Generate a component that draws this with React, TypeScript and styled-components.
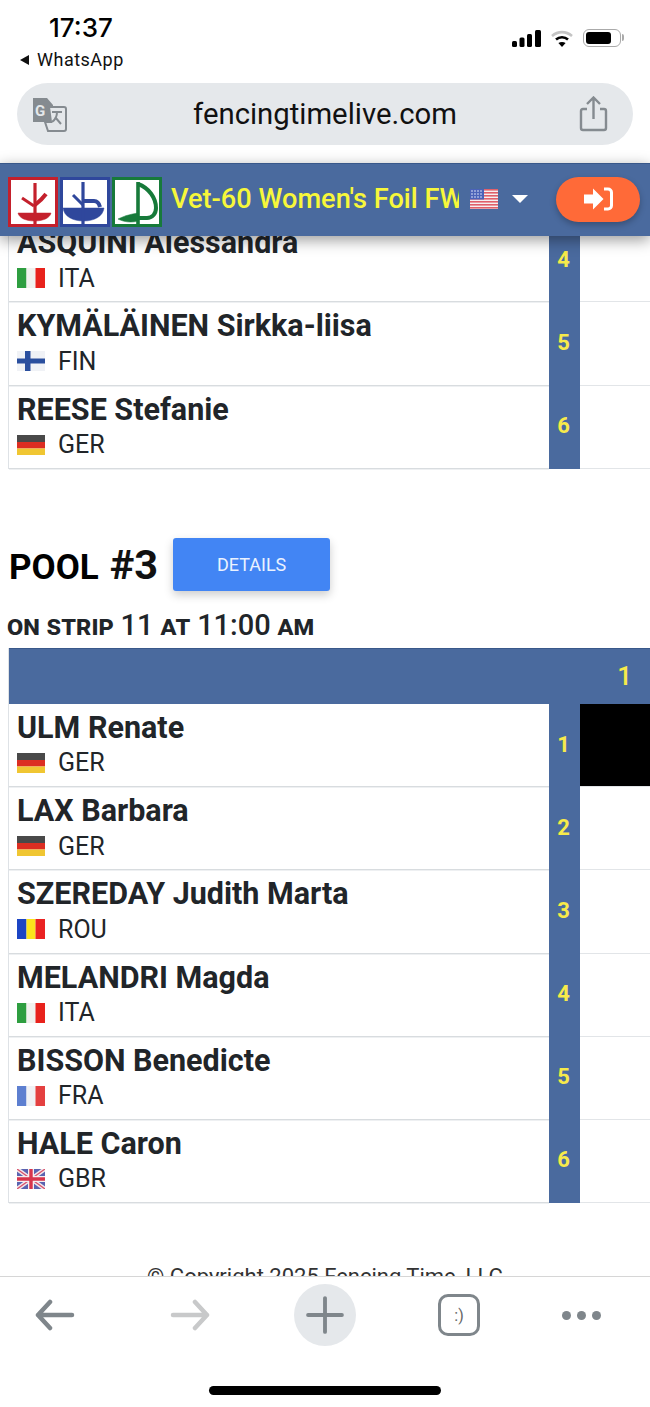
import React from "react";
import styled, { createGlobalStyle } from "styled-components";
import { Plus } from "lucide-react";

const GlobalStyle = createGlobalStyle`
  html, body {
    margin: 0;
    padding: 0;
    background: #fff;
  }
  * {
    box-sizing: border-box;
  }
`;

type Fencer = { name: string; code: string };

const topPool: Fencer[] = [
  { name: "ASQUINI Alessandra", code: "ITA" },
  { name: "KYMÄLÄINEN Sirkka-liisa", code: "FIN" },
  { name: "REESE Stefanie", code: "GER" },
];

const pool3: Fencer[] = [
  { name: "ULM Renate", code: "GER" },
  { name: "LAX Barbara", code: "GER" },
  { name: "SZEREDAY Judith Marta", code: "ROU" },
  { name: "MELANDRI Magda", code: "ITA" },
  { name: "BISSON Benedicte", code: "FRA" },
  { name: "HALE Caron", code: "GBR" },
];

function FlagArt({ code }: { code: string }) {
  switch (code) {
    case "ITA":
      return (
        <>
          <rect width="9.5" height="20" fill="#2f9e3f" />
          <rect x="9.5" width="9" height="20" fill="#f1f1ee" />
          <rect x="18.5" width="9.5" height="20" fill="#e8211f" />
        </>
      );
    case "FIN":
      return (
        <>
          <rect width="28" height="20" fill="#f0f2f6" />
          <rect x="8" width="5.500" height="20" fill="#2c4f9e" />
          <rect y="7.500" width="28" height="5" fill="#2c4f9e" />
        </>
      );
    case "GER":
      return (
        <>
          <rect width="28" height="7" fill="#4a4a48" />
          <rect y="7" width="28" height="6.500" fill="#dc2f22" />
          <rect y="13.500" width="28" height="6.500" fill="#f0c632" />
        </>
      );
    case "ROU":
      return (
        <>
          <rect width="9.5" height="20" fill="#1f45c4" />
          <rect x="9.5" width="9" height="20" fill="#fbe31a" />
          <rect x="18.5" width="9.5" height="20" fill="#ea2320" />
        </>
      );
    case "FRA":
      return (
        <>
          <rect width="9.5" height="20" fill="#5d7fd0" />
          <rect x="9.5" width="9" height="20" fill="#f0f1f4" />
          <rect x="18.5" width="9.5" height="20" fill="#e4403f" />
        </>
      );
    default:
      return (
        <>
          <rect width="28" height="20" fill="#5a64b0" />
          <path d="M0 0l28 20M28 0L0 20" stroke="#f2e6ea" strokeWidth="4" />
          <path d="M0 0l28 20M28 0L0 20" stroke="#d8506a" strokeWidth="1.300" />
          <path d="M14 0v20M0 10h28" stroke="#f4eef0" strokeWidth="6" />
          <path d="M14 0v20M0 10h28" stroke="#d8344c" strokeWidth="3.400" />
        </>
      );
  }
}

function Flag({ code }: { code: string }) {
  return (
    <FlagSvg viewBox="0 0 28 20">
      <filter id={`soft-${code}`}>
        <feGaussianBlur stdDeviation="0.55" />
      </filter>
      <g filter={`url(#soft-${code})`}>
        <FlagArt code={code} />
      </g>
    </FlagSvg>
  );
}

function UsFlag() {
  return (
    <UsFlagSvg viewBox="0 0 28 20">
      <rect width="28" height="20" fill="#f6f0f0" />
      {[0, 3, 6, 9, 12, 15, 18].map((y) => (
        <rect key={y} y={y} width="28" height="1.6" fill="#e0606a" />
      ))}
      <rect width="14" height="10.5" fill="#4a62b8" />
      {[2, 5, 8].map((y) =>
        [2, 5, 8, 11].map((x) => (
          <circle key={`${x}-${y}`} cx={x} cy={y} r="0.8" fill="#e8ecff" />
        ))
      )}
    </UsFlagSvg>
  );
}

function Logo({ color, kind }: { color: string; kind: "foil" | "epee" | "sabre" }) {
  return (
    <LogoBox $color={color}>
      <svg viewBox="0 0 44 44" width="44" height="44">
        {kind === "foil" && (
          <g fill={color} stroke={color}>
            <path d="M7 33h33c-1 5-8 8-16.500 8S8 38 7 33z" strokeWidth="0.500" />
            <path d="M24 3v41" strokeWidth="3.200" fill="none" />
            <path d="M11 18l12 8" strokeWidth="3" fill="none" />
            <path d="M35 14c-3 4-7 8-11 11" strokeWidth="4" fill="none" />
          </g>
        )}
        {kind === "epee" && (
          <g fill={color} stroke={color}>
            <path d="M0 28h41c-1 8-9 13-20.500 13S1 36 0 28z" strokeWidth="0.500" />
            <path d="M20 2v42" strokeWidth="3.200" fill="none" />
            <path d="M10 15l10 10" strokeWidth="3" fill="none" />
            <path d="M20 21h11c3 0 5 2 6 6" strokeWidth="4" fill="none" />
          </g>
        )}
        {kind === "sabre" && (
          <g fill="none" stroke={color}>
            <path d="M23 2v42" strokeWidth="3.600" />
            <path d="M23 4c11 4 18 14 18 24 0 6-4 10-9 10h-8" strokeWidth="4" />
            <path d="M3 39c6-3 13-5 20-6v8c-7 2-14 1-20-2z" fill={color} strokeWidth="0.500" />
          </g>
        )}
      </svg>
    </LogoBox>
  );
}

function PoolRow({ fencer, index, blocked }: { fencer: Fencer; index: number; blocked?: boolean }) {
  return (
    <Row>
      <NameCell>
        <FencerName>{fencer.name}</FencerName>
        <CountryLine>
          <Flag code={fencer.code} />
          <CountryCode>{fencer.code}</CountryCode>
        </CountryLine>
      </NameCell>
      <IndexCell>{index}</IndexCell>
      <BoutCell $blocked={blocked} />
    </Row>
  );
}

export default function App() {
  return (
    <>
      <GlobalStyle />
      <Screen>
        <BrowserTop>
          <StatusBar>
            <div>
              <Clock>17:37</Clock>
              <BackLink>
                <BackTriangle />
                WhatsApp
              </BackLink>
            </div>
            <StatusIcons>
              <svg width="29" height="17" viewBox="0 0 29 17" fill="#000">
                <rect x="0" y="11" width="5" height="6" rx="1.500" />
                <rect x="7.500" y="7.500" width="5" height="9.500" rx="1.500" />
                <rect x="15" y="4" width="5" height="13" rx="1.500" />
                <rect x="23" y="0" width="6" height="17" rx="1.500" />
              </svg>
              <svg width="24" height="17" viewBox="0 0 24 17" fill="none">
                <path d="M2 6C8 .8 16 .8 22 6" stroke="#c4c4c4" strokeWidth="2.600" />
                <path d="M6 9.500c3.400-3 8.600-3 12 0" stroke="#000" strokeWidth="2.600" />
                <path d="M12 17l-3.600-4c2.100-1.500 5.100-1.500 7.200 0z" fill="#000" />
              </svg>
              <Battery>
                <BatteryLevel />
              </Battery>
            </StatusIcons>
          </StatusBar>
          <AddressBar>
            <svg width="36" height="36" viewBox="0 0 36 36">
              <path d="M2 2h14l6 7v17H2z" fill="#858b90" />
              <path d="M18 11h15c1 0 2 1 2 2v20c0 1-1 2-2 2H17l-3-9h6z" fill="#e4e7ea" stroke="#858b90" strokeWidth="2" />
              <text x="4" y="20" fontSize="15" fontWeight="700" fontFamily="Roboto, sans-serif" fill="#e4e7ea">G</text>
              <path d="M21 16h10M26 16c0 5-2 8-5 10M24 21l6 7" stroke="#858b90" strokeWidth="2" fill="none" />
            </svg>
            <Url>fencingtimelive.com</Url>
            <svg width="30" height="36" viewBox="0 0 30 36" fill="none" stroke="#858b90" strokeWidth="2.400">
              <path d="M8 13H4c-1.400 0-2 .8-2 2v17c0 1.400.7 2 2 2h21c1.400 0 2-.7 2-2V15c0-1.300-.6-2-2-2h-4" />
              <path d="M14.500 23V2M8 8l6.500-6.500L21 8" />
            </svg>
          </AddressBar>
        </BrowserTop>

        <NavBar>
          <Logos>
            <Logo color="#c4202c" kind="foil" />
            <Logo color="#2f479c" kind="epee" />
            <Logo color="#177a3a" kind="sabre" />
          </Logos>
          <EventTitle>Vet-60 Women's Foil FWV60</EventTitle>
          <UsFlag />
          <Caret />
          <LoginButton aria-label="Sign in">
            <svg width="30" height="24" viewBox="0 0 30 24">
              <path d="M1 7.500h9V1.500L20.500 12 10 22.500v-6H1z" fill="#fff" />
              <path d="M21 2h4c2 0 3.500 1.500 3.500 3.500v13c0 2-1.500 3.500-3.500 3.500h-4" fill="none" stroke="#fff" strokeWidth="3" />
            </svg>
          </LoginButton>
        </NavBar>

        <Content>
          <Scrolled>
            <Table>
              {topPool.map((fencer, i) => (
                <PoolRow key={fencer.name} fencer={fencer} index={i + 4} />
              ))}
            </Table>

            <PoolHeading>
              <PoolTitle>
                POOL <PoolNumber>#3</PoolNumber>
              </PoolTitle>
              <DetailsButton>DETAILS</DetailsButton>
            </PoolHeading>
            <StripLine>
              on strip <StripValue>11</StripValue> at <StripValue>11:00</StripValue> am
            </StripLine>

            <Table>
              <HeaderRow>
                <HeaderNumber>1</HeaderNumber>
              </HeaderRow>
              {pool3.map((fencer, i) => (
                <PoolRow key={fencer.name} fencer={fencer} index={i + 1} blocked={i === 0} />
              ))}
            </Table>

            <Copyright>© Copyright 2025 Fencing Time, LLC</Copyright>
          </Scrolled>
        </Content>

        <BottomBar>
          <BottomIcons>
            <IconSlot>
              <svg width="40" height="32" viewBox="0 0 40 32" fill="none" stroke="#7f868b" strokeWidth="4.500" strokeLinecap="round" strokeLinejoin="round">
                <path d="M37 16H3M15 3L3 16l12 13" />
              </svg>
            </IconSlot>
            <IconSlot>
              <svg width="40" height="32" viewBox="0 0 40 32" fill="none" stroke="#c8c9ca" strokeWidth="4.500" strokeLinecap="round" strokeLinejoin="round">
                <path d="M3 16h34M25 3l12 13-12 13" />
              </svg>
            </IconSlot>
            <PlusCircle>
              <Plus size={58} color="#7f868b" strokeWidth={1.6} />
            </PlusCircle>
            <IconSlot>
              <TabCounter>:)</TabCounter>
            </IconSlot>
            <IconSlot>
              <Dots>
                <Dot />
                <Dot />
                <Dot />
              </Dots>
            </IconSlot>
          </BottomIcons>
          <HomeIndicator />
        </BottomBar>
      </Screen>
    </>
  );
}

const Screen = styled.div`
  width: 650px;
  height: 1407px;
  display: flex;
  flex-direction: column;
  overflow: hidden;
  background: #fff;
  font-family: Roboto, "Liberation Sans", sans-serif;
  color: #212529;
`;

const BrowserTop = styled.header`
  height: 163px;
  flex-shrink: 0;
  padding: 14px 17px 0;
`;

const StatusBar = styled.div`
  height: 69px;
  display: flex;
  justify-content: space-between;
  align-items: flex-start;
`;

const Clock = styled.div`
  margin-left: 32px;
  font-family: Inter, Roboto, sans-serif;
  font-size: 26px;
  line-height: 28px;
  font-weight: 500;
  color: #000;
`;

const BackLink = styled.div`
  margin: 5px 0 0 3px;
  display: flex;
  align-items: center;
  gap: 8px;
  font-size: 18px;
  line-height: 26px;
  letter-spacing: 0.5px;
  color: #111;
`;

const BackTriangle = styled.span`
  width: 0;
  height: 0;
  border-top: 5.5px solid transparent;
  border-bottom: 5.5px solid transparent;
  border-right: 9px solid #111;
`;

const StatusIcons = styled.div`
  margin: 15px 12px 0 0;
  display: flex;
  align-items: center;
  gap: 9px;
`;

const Battery = styled.div`
  position: relative;
  width: 38px;
  height: 18px;
  padding: 2px;
  border: 1.5px solid #aaa;
  border-radius: 6px;

  &::after {
    content: "";
    position: absolute;
    right: -4px;
    top: 4px;
    width: 2px;
    height: 7px;
    background: #aaa;
    border-radius: 0 2px 2px 0;
  }
`;

const BatteryLevel = styled.div`
  width: 25px;
  height: 100%;
  background: #000;
  border-radius: 3px;
`;

const AddressBar = styled.div`
  height: 62px;
  padding: 0 24px 0 14px;
  display: flex;
  align-items: center;
  justify-content: space-between;
  background: #e5e8eb;
  border-radius: 31px;
`;

const Url = styled.div`
  margin-left: 4px;
  font-size: 29.3px;
  color: #111;
`;

const NavBar = styled.nav`
  position: relative;
  z-index: 2;
  height: 73px;
  flex-shrink: 0;
  display: flex;
  align-items: center;
  padding: 0 10px 2px 8px;
  background: #4a6a9e;
  border-top: 1px solid #39588a;
  box-shadow: 0 4px 14px rgba(0, 0, 0, 0.4);
`;

const Logos = styled.div`
  display: flex;
  gap: 2px;
  flex-shrink: 0;
  margin-top: 5px;
`;

const LogoBox = styled.div<{ $color: string }>`
  width: 50px;
  height: 50px;
  background: #fff;
  border: 3px solid ${(p) => p.$color};
`;

const EventTitle = styled.div`
  width: 288px;
  margin-left: 9px;
  overflow: hidden;
  white-space: nowrap;
  font-size: 27.2px;
  font-weight: 500;
  color: #f7f73a;
`;

const UsFlagSvg = styled.svg`
  width: 28px;
  height: 20px;
  margin-left: 11px;
  flex-shrink: 0;
`;

const Caret = styled.span`
  width: 0;
  height: 0;
  margin-left: 14px;
  border-left: 8px solid transparent;
  border-right: 8px solid transparent;
  border-top: 8px solid #fff;
`;

const LoginButton = styled.button`
  width: 84px;
  height: 45px;
  margin-left: auto;
  display: flex;
  align-items: center;
  justify-content: center;
  border: none;
  border-radius: 23px;
  background: #ff6a38;
  box-shadow: 0 3px 6px rgba(0, 0, 0, 0.25);
`;

const Content = styled.main`
  flex: 1;
  min-height: 0;
  overflow: hidden;
`;

const Scrolled = styled.div`
  margin-top: -16.8px;
  padding-left: 8px;
`;

const Table = styled.div`
  border-left: 1px solid #dee2e6;
`;

const Row = styled.div`
  display: flex;
  height: 83.2px;
`;

const NameCell = styled.div`
  width: 540px;
  padding: 5px 0 0 8px;
  border-bottom: 1px solid #d8dcdf;
  box-shadow: 0 1px 0 #eef0f2;
`;

const FencerName = styled.div`
  font-size: 30.5px;
  line-height: 38px;
  font-weight: 700;
  white-space: nowrap;
`;

const CountryLine = styled.div`
  display: flex;
  align-items: center;
  gap: 13px;
  height: 32px;
`;

const FlagSvg = styled.svg`
  width: 28px;
  height: 20px;
`;

const CountryCode = styled.span`
  font-size: 25px;
`;

const IndexCell = styled.div`
  width: 31px;
  padding: 0 2px 3px 0;
  display: flex;
  align-items: center;
  justify-content: center;
  background: #4a6a9e;
  color: #f7ea4a;
  font-size: 22px;
  font-weight: 700;
`;

const BoutCell = styled.div<{ $blocked?: boolean }>`
  width: 70px;
  background: ${(p) => (p.$blocked ? "#000" : "#fff")};
  border-bottom: 1px solid #e2e5e8;
`;

const PoolHeading = styled.div`
  height: 53px;
  margin-top: 69.2px;
  padding-left: 1px;
  display: flex;
  align-items: center;
  gap: 15px;
`;

const PoolTitle = styled.h2`
  margin: 0;
  display: flex;
  align-items: baseline;
  gap: 11px;
  font-size: 35px;
  font-weight: 700;
  color: #000;
`;

const PoolNumber = styled.span`
  font-size: 41.5px;
  color: #111;
`;

const DetailsButton = styled.button`
  width: 157px;
  height: 53px;
  border: none;
  border-radius: 3px;
  background: #4285f4;
  color: #eaf2ff;
  font-family: Roboto, sans-serif;
  font-size: 18px;
  box-shadow: 0 4px 10px rgba(0, 0, 0, 0.2);
`;

const StripLine = styled.div`
  height: 57px;
  margin-left: -1px;
  padding-top: 16px;
  font-size: 27.4px;
  line-height: 36px;
  font-weight: 700;
  font-variant: small-caps;
  white-space: nowrap;
`;

const StripValue = styled.span`
  font-size: 29px;
  font-weight: 500;
  font-variant: normal;
`;

const HeaderRow = styled.div`
  height: 56px;
  display: flex;
  align-items: center;
  justify-content: flex-end;
  padding-right: 18px;
  background: #4a6a9e;
  border-top: 1px solid #39588a;
`;

const HeaderNumber = styled.span`
  font-size: 26px;
  font-weight: 500;
  color: #f7ea4a;
`;

const Copyright = styled.div`
  margin: 61px 0 0 -8px;
  text-align: center;
  font-size: 22px;
  color: #333;
`;

const BottomBar = styled.footer`
  position: relative;
  height: 131px;
  flex-shrink: 0;
  background: #fff;
  border-top: 1.5px solid #d6d6d6;
  padding-top: 7px;
`;

const BottomIcons = styled.div`
  display: grid;
  grid-template-columns: 110px 160px 110px 158px 86px;
`;

const IconSlot = styled.div`
  height: 62px;
  display: flex;
  align-items: center;
  justify-content: center;
`;

const PlusCircle = styled(IconSlot)`
  width: 62px;
  border-radius: 50%;
  justify-self: center;
  background: #e5e8eb;
`;

const TabCounter = styled.div`
  width: 42px;
  height: 42px;
  display: flex;
  align-items: center;
  justify-content: center;
  border: 3.5px solid #7f868b;
  border-radius: 10px;
  color: #666;
  font-size: 16px;
`;

const Dots = styled.div`
  display: flex;
  gap: 6px;
`;

const Dot = styled.span`
  width: 9px;
  height: 9px;
  border-radius: 50%;
  background: #7f868b;
`;

const HomeIndicator = styled.div`
  width: 232px;
  height: 9px;
  margin: 40px auto 0;
  background: #000;
  border-radius: 5px;
`;
